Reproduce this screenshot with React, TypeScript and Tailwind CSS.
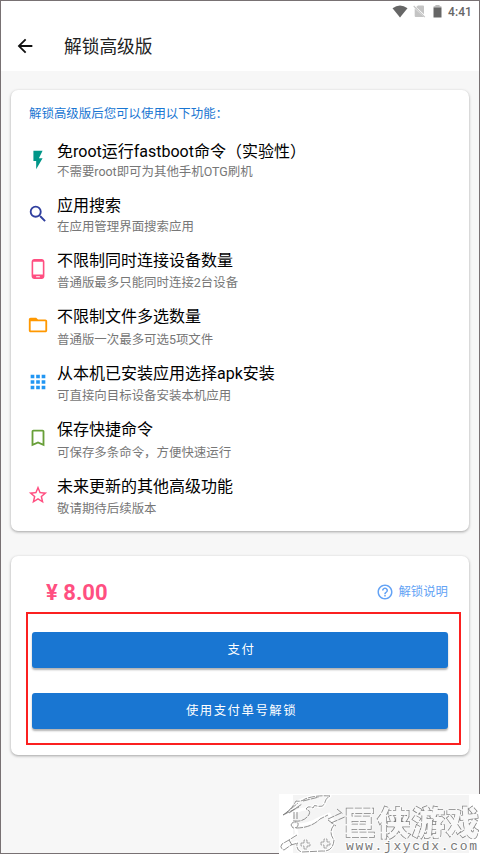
import type { IconType } from 'react-icons'
import {
  MdApps,
  MdArrowBack,
  MdBookmarkBorder,
  MdFlashOn,
  MdFolderOpen,
  MdHelpOutline,
  MdPhoneAndroid,
  MdSearch,
  MdStarBorder,
} from 'react-icons/md'

type Feature = { icon: IconType; color: string; row: string; gap: string; title: string; desc: string }

const features: Feature[] = [
  { icon: MdFlashOn, color: 'text-[#009688]', row: 'h-[54px]', gap: 'mt-0', title: '免root运行fastboot命令（实验性）', desc: '不需要root即可为其他手机OTG刷机' },
  { icon: MdSearch, color: 'text-[#303f9f]', row: 'h-[55px]', gap: 'mt-px', title: '应用搜索', desc: '在应用管理界面搜索应用' },
  { icon: MdPhoneAndroid, color: 'text-[#ff4f81]', row: 'h-14', gap: 'mt-0.5', title: '不限制同时连接设备数量', desc: '普通版最多只能同时连接2台设备' },
  { icon: MdFolderOpen, color: 'text-[#ff9800]', row: 'h-[57px]', gap: 'mt-[3px]', title: '不限制文件多选数量', desc: '普通版一次最多可选5项文件' },
  { icon: MdApps, color: 'text-[#2196f3]', row: 'h-14', gap: 'mt-0.5', title: '从本机已安装应用选择apk安装', desc: '可直接向目标设备安装本机应用' },
  { icon: MdBookmarkBorder, color: 'text-[#689f38]', row: 'h-[57px]', gap: 'mt-[3px]', title: '保存快捷命令', desc: '可保存多条命令，方便快速运行' },
  { icon: MdStarBorder, color: 'text-[#ff4f81]', row: 'h-[50px]', gap: 'mt-0.5', title: '未来更新的其他高级功能', desc: '敬请期待后续版本' },
]

function StatusBar() {
  return (
    <div className="flex h-[21px] items-center justify-end pr-[7px] text-[#666]">
      <svg width="16" height="13" viewBox="0 0 16 13" className="mr-[5px]">
        <path d="M0.5 3.2 Q8 -2.4 15.5 3.2 L8 12.5 Z" fill="currentColor" />
      </svg>
      <svg width="13" height="13" viewBox="0 0 13 13" className="mr-[7px]">
        <path d="M5 0.5 H10 Q11 0.5 11 1.5 V9.2 L3.2 2.1 Z M1.7 3.4 L11 12 H2.7 Q1.7 12 1.7 11 Z" fill="#c4c4c4" />
        <path d="M0.7 1 L11.8 12.2" stroke="#c4c4c4" strokeWidth="1.1" />
      </svg>
      <svg width="9" height="13" viewBox="0 0 9 13" className="mr-[6px]">
        <path d="M2.4 0 H6.6 V1.3 H8.4 V3 H0.6 V1.3 H2.4 Z" fill="#bbb" />
        <path d="M0.5 2.6 H8.5 V12.5 H0.5 Z" fill="currentColor" />
      </svg>
      <span className="text-[12px] font-medium leading-none tracking-[0.1px]">4:41</span>
    </div>
  )
}

function FeatureRow({ icon: Icon, color, row, gap, title, desc }: Feature) {
  return (
    <li className={`flex ${row}`}>
      <div className="flex h-[35px] w-[28px] items-center">
        <Icon size={22} className={`-ml-[2px] ${color}`} />
      </div>
      <div className="whitespace-nowrap">
        <h3 className="h-5 text-[16px] leading-5 text-black">{title}</h3>
        <p className={`${gap} text-[12.45px] leading-5 text-[#777]`}>{desc}</p>
      </div>
    </li>
  )
}

function PayButton({ children }: { children: string }) {
  return (
    <button className="flex h-9 w-full items-center justify-center rounded-[3px] bg-[#1976d2] pl-[3px] text-[12.4px] tracking-[1.5px] text-white shadow-[0_2px_2px_rgba(0,0,0,0.3)]">
      {children}
    </button>
  )
}

function Watermark() {
  return (
    <div className="absolute -bottom-px -right-px h-[60px] w-[201px] bg-white">
      <svg width="201" height="60" viewBox="0 0 201 60">
        <path d="M14 1 H190 V59 H14 Z" fill="#f4f4f4" />
        <g fill="#f7f7f7" stroke="#fff" strokeWidth="3" strokeLinejoin="round">
          <path d="M4 21 Q15 13 20 7 Q35 0 51 2 Q46 6 45 11 Q43 14 38 12 Q35 10 34 14 Q29 11 27 15 Q20 15 14 20 Z" />
          <path d="M16 31 Q30 31 39 25 L50 20 L55 29 Q50 39 55 46 Q54 58 43 57 L23 58 Q17 57 18 48 L1 55 L2 52 L18 40 Z" />
        </g>
        <g fill="none" stroke="#777" strokeWidth="0.8" strokeDasharray="7 1">
          <path d="M4 21 Q13 15 17 7 Q22 8 26 5 Q36 1 51 2 Q47 4 46 8 Q45 14 38 12 Q35 10 34 14 Q29 11 27 15 Q33 17 29 22 Q24 28 16 27" />
          <path d="M4 21 L20 13 M6 20 L19 9 M10 19 L23 10 M24 7 L40 3 M15 18 V27 M18 18 V25 M12 31 Q14 26 19 29 Q20 34 14 34 Z" />
          <path d="M17 34 Q32 34 41 25 L49 21 M55 31 Q49 38 55 46 Q54 58 43 57 L23 58 Q17 57 18 49" />
          <path d="M18 41 L10 46 L3 50 Q0 54 5 56 L12 51 L19 49 M10 46 L13 51 M49 25 L62 19 M52 29 L68 22 M58 15 L64 20 M49 26 L57 32" />
          <path d="M22 49 h3 v-3 h3 v3 h3 v3 h-3 v3 h-3 v-3 h-3 z M42 48 h3 v-3 h3 v3 h3 v3 h-3 v3 h-3 v-3 h-3 z" strokeWidth="0.6" />
        </g>
        <text
          x="64"
          y="41"
          textLength="136"
          fontSize="33"
          fill="#f8f8f8"
          stroke="#808080"
          strokeWidth="1.5"
          strokeDasharray="7 1.5"
          paintOrder="stroke"
          className="font-['Noto_Sans_CJK_SC',sans-serif] font-black drop-shadow-[0_0_1px_#fff]"
        >
          巨侠游戏
        </text>
        <text
          x="67"
          y="56"
          textLength="131"
          fontSize="13"
          fill="#777"
          stroke="#fff"
          strokeWidth="2"
          paintOrder="stroke"
          className="font-['Liberation_Mono',monospace]"
        >
          www.jxycdx.com
        </text>
      </svg>
    </div>
  )
}

export default function App() {
  return (
    <div className="relative h-[854px] w-[480px] border border-[#787173] bg-[#f7f7f7] font-[Roboto,'Noto_Sans_CJK_SC',sans-serif]">
      <header className="h-[70px] bg-white">
        <StatusBar />
        <div className="flex h-[48px] items-center pl-[13px]">
          <MdArrowBack size={22} className="text-[#111]" />
          <h1 className="ml-7 pt-[2px] text-[17.7px] leading-6 text-[#222]">解锁高级版</h1>
        </div>
      </header>

      <main className="px-[10px] pt-[19px]">
        <section className="h-[441px] rounded-[7px] bg-white pl-[18px] pt-[14px] shadow-[0_1px_3px_rgba(0,0,0,0.35)]">
          <h2 className="h-[38px] text-[12.45px] leading-5 text-[#1976d2]">解锁高级版后您可以使用以下功能：</h2>
          <ul>
            {features.map(f => <FeatureRow key={f.title} {...f} />)}
          </ul>
        </section>

        <section className="mt-[25px] h-[199px] rounded-[7px] bg-white px-[15px] pt-4 shadow-[0_1px_3px_rgba(0,0,0,0.35)]">
          <div className="flex h-10 items-center justify-between pl-5 pr-[6px]">
            <span className="text-[22px] font-bold text-[#ff4f81]">¥ 8.00</span>
            <a className="flex items-center gap-1 text-[12.4px] text-[#64a3f5]">
              <MdHelpOutline size={18} />
              解锁说明
            </a>
          </div>
          <div className="h-[133px] w-[435px] space-y-[25px] border-2 border-[#fb2020] pl-1 pr-[11px] pt-[18px]">
            <PayButton>支付</PayButton>
            <PayButton>使用支付单号解锁</PayButton>
          </div>
        </section>
      </main>

      <Watermark />
    </div>
  )
}
